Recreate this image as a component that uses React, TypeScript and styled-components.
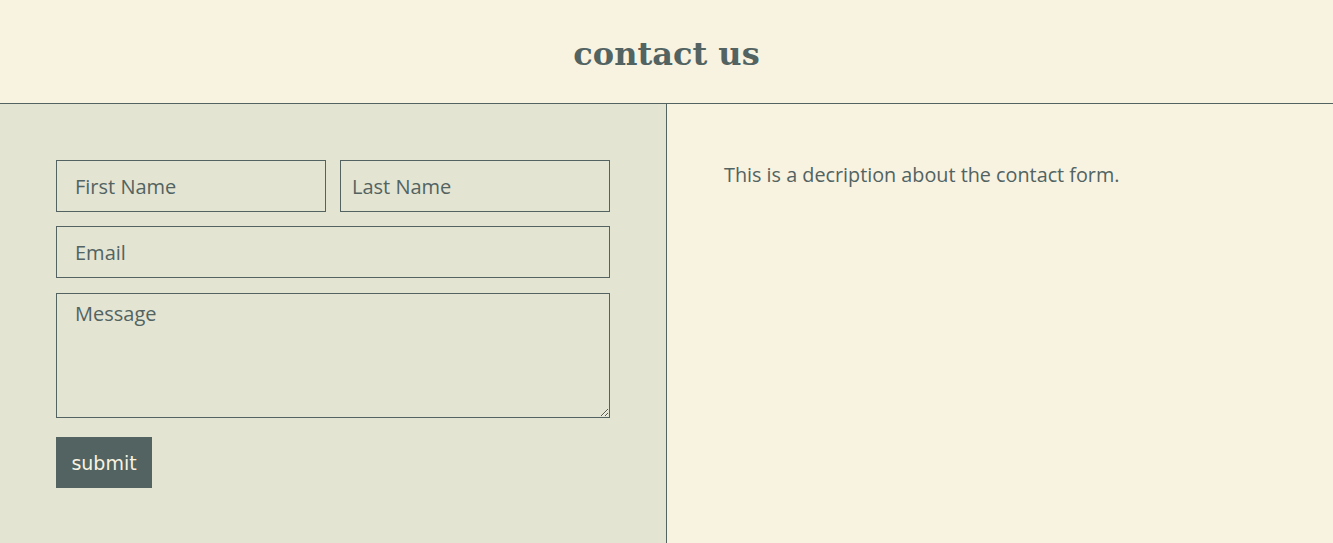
import React from 'react';
import styled, { createGlobalStyle } from 'styled-components';

const ink = '#526361';
const cream = '#f8f2e1';
const sage = '#e4e4d3';

const GlobalStyle = createGlobalStyle`
  html, body {
    margin: 0;
    padding: 0;
    background: ${cream};
    color: ${ink};
    font-family: "Open Sans", "Liberation Sans", sans-serif;
  }
  * {
    box-sizing: border-box;
  }
`;

const Page = styled.div`
  min-height: 543px;
  display: flex;
  flex-direction: column;
`;

const Header = styled.header`
  height: 104px;
  border-bottom: 1px solid ${ink};
  display: flex;
  align-items: center;
  justify-content: center;
  padding-top: 4px;

  h1 {
    margin: 0;
    font-family: "DejaVu Serif", "Liberation Serif", serif;
    font-weight: bold;
    font-size: 32px;
    color: ${ink};
  }
`;

const Main = styled.main`
  flex: 1;
  display: grid;
  grid-template-columns: 667px 1fr;
  height: 439px;
`;

const FormPanel = styled.section`
  background: ${sage};
  border-right: 1px solid ${ink};
  padding: 56px 56px 0 56px;
`;

const Form = styled.form`
  width: 554px;
  display: flex;
  flex-direction: column;
`;

const Row = styled.div<{ $cols: number }>`
  display: grid;
  grid-template-columns: repeat(${(p) => p.$cols}, 1fr);
  gap: 14px;
  margin-bottom: 14px;
`;

const Input = styled.input<{ $pad?: number }>`
  width: 100%;
  min-width: 0;
  height: 52px;
  background: transparent;
  border: 1px solid ${ink};
  border-radius: 0;
  padding: 0 ${(p) => p.$pad ?? 18}px;
  font-family: "Open Sans", "Liberation Sans", sans-serif;
  font-size: 20px;
  color: ${ink};
  outline: none;

  &::placeholder {
    color: ${ink};
    opacity: 1;
  }
`;

const Message = styled.textarea`
  width: 100%;
  height: 125px;
  margin-top: 1px;
  background: transparent;
  border: 1px solid ${ink};
  border-radius: 0;
  padding: 6px 18px;
  font-family: "Open Sans", "Liberation Sans", sans-serif;
  font-size: 20px;
  color: ${ink};
  outline: none;
  resize: vertical;

  &::placeholder {
    color: ${ink};
    opacity: 1;
  }
`;

const Submit = styled.button`
  align-self: flex-start;
  margin-top: 19px;
  width: 96px;
  height: 51px;
  background: ${ink};
  border: none;
  border-radius: 0;
  color: ${cream};
  font-family: "DejaVu Sans", "Liberation Sans", sans-serif;
  font-size: 19px;
  cursor: pointer;
`;

const InfoPanel = styled.section`
  padding: 57px 57px;

  p {
    margin: 0;
    font-size: 19.8px;
    line-height: 28px;
  }
`;

export default function App() {
  return (
    <>
      <GlobalStyle />
      <Page>
        <Header>
          <h1>contact us</h1>
        </Header>
        <Main>
          <FormPanel>
            <Form onSubmit={(e) => e.preventDefault()}>
              <Row $cols={2}>
                <Input placeholder="First Name" />
                <Input placeholder="Last Name" $pad={11} />
              </Row>
              <Row $cols={1}>
                <Input placeholder="Email" />
              </Row>
              <Message placeholder="Message" />
              <Submit type="submit">submit</Submit>
            </Form>
          </FormPanel>
          <InfoPanel>
            <p>This is a decription about the contact form.</p>
          </InfoPanel>
        </Main>
      </Page>
    </>
  );
}
